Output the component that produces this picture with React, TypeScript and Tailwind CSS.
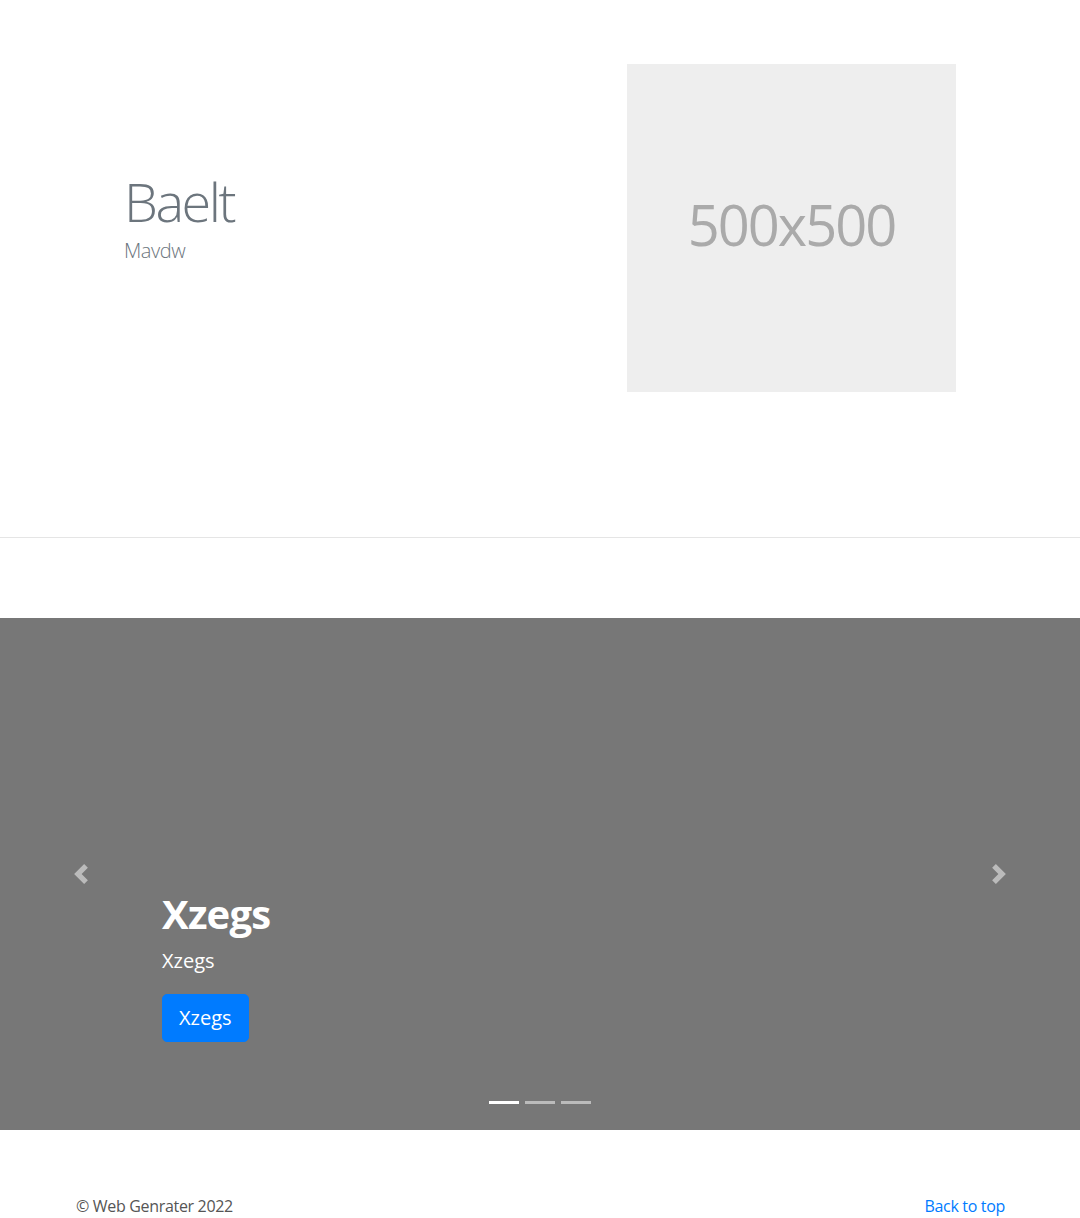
const font = { fontFamily: '"Open Sans", "Noto Sans", sans-serif' };

function ChevronLeft() {
  return (
    <svg width="20" height="20" viewBox="0 0 8 8" fill="#fff">
      <path d="M5.25 0l-4 4 4 4 1.5-1.5L4.25 4l2.5-2.5L5.25 0z" />
    </svg>
  );
}

function ChevronRight() {
  return (
    <svg width="20" height="20" viewBox="0 0 8 8" fill="#fff">
      <path d="M2.75 0l-1.5 1.5L3.75 4l-2.5 2.5L2.75 8l4-4-4-4z" />
    </svg>
  );
}

export default function App() {
  return (
    <div className="bg-white text-[#212529]" style={font}>
      {/* ── Hero ── */}
      <section className="mx-auto w-[960px] px-[15px] pt-[64px] pb-[145px]">
        <div className="flex items-center">
          <div className="w-[465px] pl-[49px] pb-[20px]">
            <h1 className="text-[54px] font-light leading-[62px] tracking-[-0.045em] text-[#6c757d]">Baelt</h1>
            <p className="mt-[4px] text-[20px] font-light leading-[30px] tracking-[-0.02em] text-[#6c757d]">Mavdw</p>
          </div>
          <div className="flex-1 pl-[87px]">
            <div className="flex h-[328px] w-[329px] items-center justify-center bg-[#eeeeee] pb-[8px]">
              <span className="text-[56px] leading-none tracking-[-2px] text-[#aaaaaa]">500x500</span>
            </div>
          </div>
        </div>
      </section>

      <hr className="border-t border-[#e5e5e5]" />

      {/* ── Carousel ── */}
      <section className="relative mt-[80px] h-[512px] bg-[#777777]">
        <button className="absolute inset-y-0 left-0 flex w-[15%] items-center justify-center opacity-50">
          <ChevronLeft />
        </button>
        <button className="absolute inset-y-0 right-0 flex w-[15%] items-center justify-center opacity-50">
          <ChevronRight />
        </button>

        <div className="absolute bottom-[88px] left-[15%] right-[15%] text-white">
          <h2 className="mb-[8px] text-[40px] font-bold leading-[1.2] tracking-[-0.02em]">Xzegs</h2>
          <p className="mb-[18px] text-[20px] leading-[1.5]">Xzegs</p>
          <button className="rounded-[5px] border border-[#007bff] bg-[#007bff] px-[16px] py-[8px] text-[20px] leading-[1.5] text-white">
            Xzegs
          </button>
        </div>

        <div className="absolute bottom-[26px] left-0 right-0 flex justify-center gap-[6px]">
          <span className="h-[3px] w-[30px] bg-white" />
          <span className="h-[3px] w-[30px] bg-white/50" />
          <span className="h-[3px] w-[30px] bg-white/50" />
        </div>
      </section>

      {/* ── Footer ── */}
      <footer className="mx-auto flex w-[960px] items-center justify-between px-[15px] pt-[64px] text-[16px] leading-[24px] tracking-[-0.02em]">
        <p className="pl-[1px] text-[#555555]">© Web Genrater 2022</p>
        <a href="#" className="text-[#007bff]">Back to top</a>
      </footer>
    </div>
  );
}
